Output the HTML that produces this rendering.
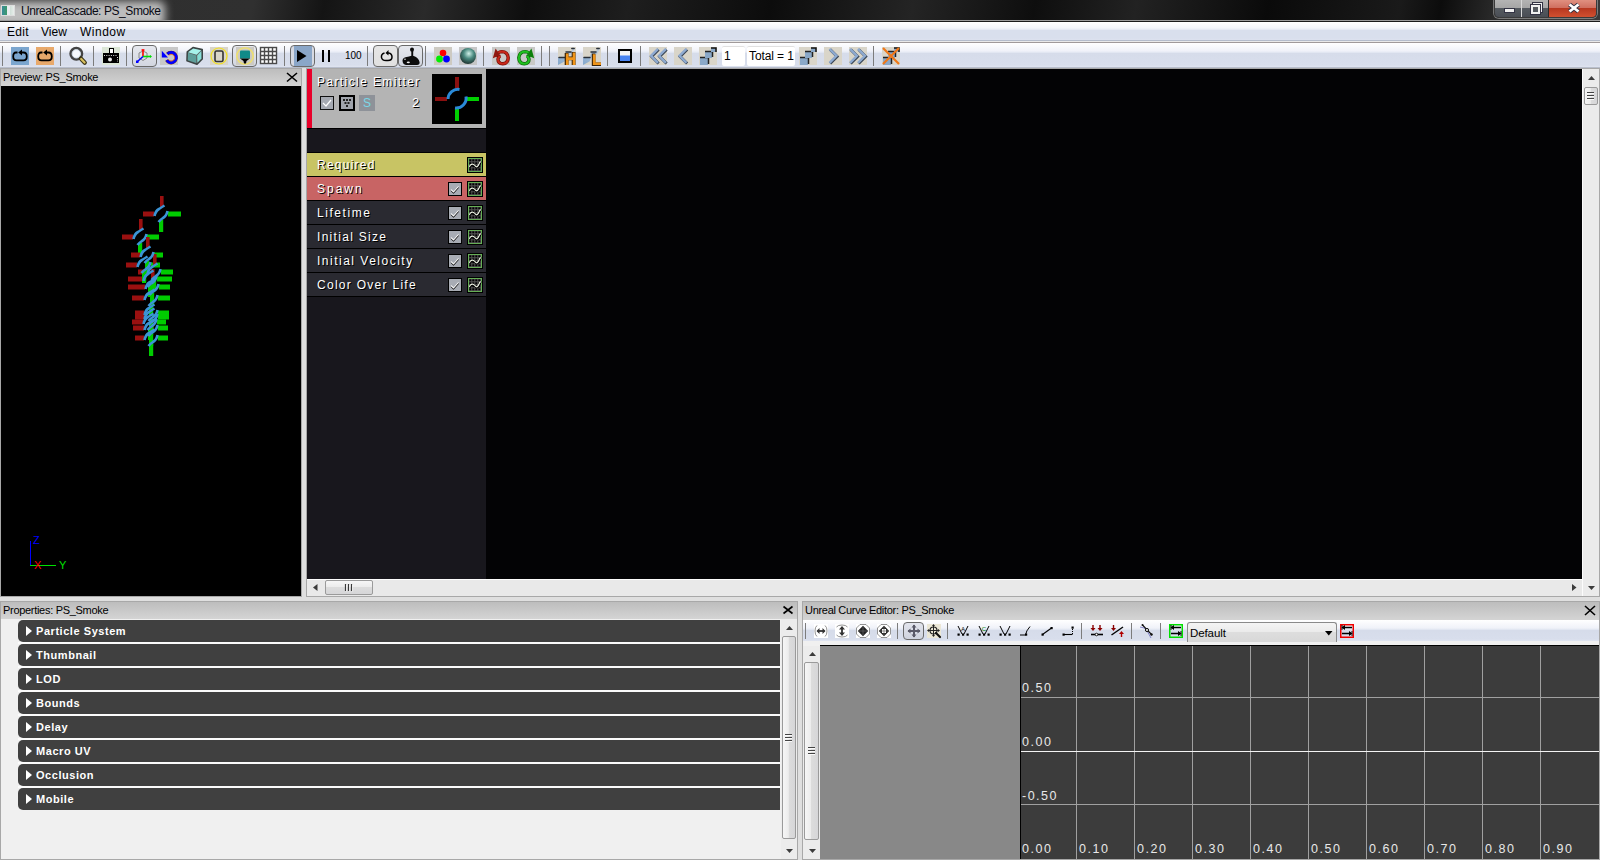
<!DOCTYPE html>
<html><head><meta charset="utf-8">
<style>
*{box-sizing:border-box;margin:0;padding:0}
html,body{width:1600px;height:860px;overflow:hidden;background:#dfdfdf;font-family:"Liberation Sans",sans-serif}
.a{position:absolute}
svg{position:absolute;overflow:visible}
#title{left:0;top:0;width:1600px;height:20px;overflow:hidden;background:linear-gradient(100deg,#2e2e2e 0px,#303030 250px,#141414 320px,#2a2a2a 420px,#0e0e0e 520px,#1e1e1e 620px,#0c0c0c 760px,#242424 900px,#0e0e0e 1020px,#222 1120px,#0a0a0a 1250px,#1a1a1a 1380px,#0c0c0c 1420px,#383838 1500px,#3a3a3a 1600px)}
#menu{left:0;top:22px;width:1600px;height:18px;background:linear-gradient(#ffffff 0px,#f3f5fa 6px,#e6eaf4 7.5px,#d9dfed 8.5px,#d9dfed 16px,#dde2ef 18px)}
#tool{left:0;top:43px;width:1600px;height:24px;background:linear-gradient(#ffffff 0px,#f0f2f9 8px,#e2e7f2 9.5px,#d6dcea 10.5px,#d8deec 22px,#dfe4f0 24px)}
.mi{position:absolute;top:25px;font-size:12px;color:#000}
.sep{position:absolute;width:1px;background:#7c7c7c;top:46px;height:20px}
.ic{position:absolute;top:47px;width:18px;height:18px}
.pb{position:absolute;top:45px;height:22px;border:1px solid #6a6a6a;border-radius:4px;background:linear-gradient(#e8eaf0,#d4d8e2)}
.hdr{position:absolute;height:18px;background:linear-gradient(#bdbdbd,#d4d4d4);font-size:11px;letter-spacing:-0.3px;color:#000;padding:2px 0 0 2px;border-top:1px solid #a8a8a8}
.xcl{position:absolute;width:10px;height:10px}
.mod{position:absolute;left:307px;width:179px;height:23px;color:#fff;font-size:12px;letter-spacing:1px;padding:5px 0 0 10px;text-shadow:1px 1px 0 #000}
.chk{position:absolute;left:448px;width:14px;height:14px;background:#a8acb4;border:1px solid #000}
.crv{position:absolute;left:467px;width:16px;height:16px;background:#111;border:1px solid #111}
.cat{position:absolute;left:18px;width:762px;height:22px;background:#404040;border-radius:5px 0 0 5px;color:#fff;font-weight:bold;font-size:11px;letter-spacing:0.55px;padding:5px 0 0 18px}
.cat:before{content:"";position:absolute;left:8px;top:6px;border-left:6.5px solid #fff;border-top:5.25px solid transparent;border-bottom:5.25px solid transparent}
.gl{position:absolute;font-family:"Liberation Sans",sans-serif;font-size:12.5px;color:#e8e8e8;letter-spacing:1.5px}
</style></head><body>

<!-- TITLE BAR -->
<div id="title" class="a"></div>
<div class="a" style="left:0;top:0;width:220px;height:20px;overflow:hidden"><div class="a" style="left:-20px;top:1px;width:185px;height:26px;background:#bdbdbd;filter:blur(4px);border-radius:6px"></div></div>
<div class="a" style="left:0;top:20px;width:1600px;height:1px;background:#9c9c9c"></div>
<div class="a" style="left:0;top:21px;width:1600px;height:1px;background:#1a1a1a"></div>
<div class="a" style="left:1px;top:5px;width:14px;height:11px;background:linear-gradient(90deg,#3a8a9a 0,#3c9a6a 5px,#e8ecef 5px,#e8ecef 8px,#d0e0d8 8px,#f4f4f4 14px);border:1px solid #ddd"></div>
<div class="a" style="left:21px;top:4px;font-size:12px;letter-spacing:-0.43px;color:#0a0a14">UnrealCascade: PS_Smoke</div>

<!-- window buttons -->
<div class="a" style="left:1494px;top:0;width:103px;height:18px;border:1px solid #3a3a3a;border-top:none;border-radius:0 0 5px 5px;overflow:hidden;box-shadow:0 0 0 1px rgba(255,255,255,.35)">
  <div class="a" style="left:0;top:0;width:27px;height:17px;background:linear-gradient(#b4b4b4 0%,#a6a6a6 45%,#555a60 50%,#4a4e55 100%);border-right:1px solid #d8d8d8"></div>
  <div class="a" style="left:27px;top:0;width:27px;height:17px;background:linear-gradient(#b4b4b4 0%,#a6a6a6 45%,#555a60 50%,#4a4e55 100%);border-right:1px solid #2a2a2a"></div>
  <div class="a" style="left:54px;top:0;width:49px;height:17px;background:linear-gradient(#e09080 0%,#d07060 45%,#b83820 50%,#d05030 100%)"></div>
  <div class="a" style="left:9px;top:8px;width:11px;height:5px;background:#f0f0f0;border:1px solid #334"></div>
  <div class="a" style="left:38px;top:3px;width:9px;height:9px;border:2px solid #f0f0f0;outline:1px solid #334"></div>
  <div class="a" style="left:36px;top:5px;width:9px;height:9px;border:2px solid #f0f0f0;outline:1px solid #334;background:#555a60"></div>
  <svg style="left:73px;top:3px" width="12" height="10"><path d="M1.5 1.5 L10.5 8.5 M10.5 1.5 L1.5 8.5" stroke="#334" stroke-width="4.6"/><path d="M1.5 1.5 L10.5 8.5 M10.5 1.5 L1.5 8.5" stroke="#fff" stroke-width="2.8"/></svg>
</div>

<!-- MENU -->
<div id="menu" class="a"></div>
<div class="a" style="left:0;top:40px;width:1600px;height:1px;background:#b4bccb"></div>
<div class="a" style="left:0;top:41px;width:1600px;height:1px;background:#e9e9e9"></div>
<div class="a" style="left:0;top:42px;width:1600px;height:1px;background:#a09a9a"></div>
<div class="mi" style="left:7px;letter-spacing:0.3px">Edit</div>
<div class="mi" style="left:41px">View</div>
<div class="mi" style="left:80px;letter-spacing:0.5px">Window</div>

<!-- TOOLBAR -->
<div id="tool" class="a"></div>
<div class="a" style="left:0;top:67px;width:1600px;height:1px;background:#b8becc"></div>
<div class="sep" style="left:2px;top:46px;height:20px"></div><div class="sep" style="left:60px;top:46px;height:20px"></div><div class="sep" style="left:93px;top:46px;height:20px"></div><div class="sep" style="left:126px;top:46px;height:20px"></div><div class="sep" style="left:284px;top:46px;height:20px"></div><div class="sep" style="left:367px;top:46px;height:20px"></div><div class="sep" style="left:425px;top:46px;height:20px"></div><div class="sep" style="left:483px;top:46px;height:20px"></div><div class="sep" style="left:541px;top:46px;height:20px"></div><div class="sep" style="left:549px;top:46px;height:20px"></div><div class="sep" style="left:607px;top:46px;height:20px"></div><div class="sep" style="left:640px;top:46px;height:20px"></div><div class="sep" style="left:873px;top:46px;height:20px"></div>
<svg style="left:11px;top:47px" width="18" height="18"><rect width="18" height="18" fill="#7ba6cf"/><path d="M6.5 5.5 H5 Q2.2 5.5 2.2 9.5 Q2.2 13.3 5.5 13.3 H12.5 Q15.8 13.3 15.8 9.5 Q15.8 5.5 12.5 5.5 H9.5" stroke="#000" stroke-width="1.8" fill="none"/><path d="M11 2.5 L7.2 5.5 L11 8.5Z" fill="#000"/></svg>
<svg style="left:36px;top:47px" width="18" height="18"><rect width="18" height="18" fill="#e8a96b"/><path d="M6.5 5.5 H5 Q2.2 5.5 2.2 9.5 Q2.2 13.3 5.5 13.3 H12.5 Q15.8 13.3 15.8 9.5 Q15.8 5.5 12.5 5.5 H9.5" stroke="#000" stroke-width="1.8" fill="none"/><path d="M11 2.5 L7.2 5.5 L11 8.5Z" fill="#000"/></svg>
<svg style="left:69px;top:47px" width="18" height="18"><circle cx="7.3" cy="6.8" r="5.6" fill="#f6f9fd" stroke="#444" stroke-width="2.8"/><circle cx="7.3" cy="6.8" r="4.2" fill="none" stroke="#d8e4f0" stroke-width="1"/><path d="M11.8 11.5 L15.8 15.8" stroke="#3a3418" stroke-width="4.2" stroke-linecap="round"/><path d="M12.2 12 L15.6 15.5" stroke="#d8c060" stroke-width="2.2" stroke-linecap="round"/></svg>
<svg style="left:102px;top:47px" width="18" height="18"><rect width="18" height="18" fill="#dbe6d6"/><rect x="1" y="6" width="16" height="10" fill="#000"/><rect x="7" y="1" width="5" height="6" fill="#000"/><rect x="8" y="2" width="3" height="4" fill="#fff"/><path d="M2 8.5 H15" stroke="#ddd" stroke-width="1" stroke-dasharray="1 1.3"/><circle cx="8" cy="12.5" r="2" fill="#eee"/><path d="M15.5 10V15" stroke="#ddd" stroke-dasharray="1 1.3"/></svg>
<div class="pb" style="left:132px;width:25px;background:linear-gradient(#e6e8ee,#d2d6e0)"></div>
<svg style="left:135px;top:47px" width="18" height="18"><path d="M8 4 L12 6 L12 11 L8 13.5 L4 11 L4 6Z" fill="none" stroke="#808080" stroke-width="0.9"/><path d="M8 9.5 V2.5" stroke="#f00" stroke-width="1.6"/><path d="M6.5 3 H9.5" stroke="#f00" stroke-width="1.4"/><path d="M8 9.5 H16" stroke="#0d0" stroke-width="1.6"/><path d="M15 8 L17 9.5 L15 11Z" fill="#0d0"/><path d="M8 9.5 L2.5 14.5" stroke="#00f" stroke-width="1.5"/><rect x="1" y="13.5" width="2.5" height="2.5" fill="#00f"/></svg>
<svg style="left:160px;top:47px" width="18" height="18"><rect width="18" height="18" fill="#c8c8c8"/><g style="filter:blur(0.2px)"><path d="M7.4 7 A5.1 5.1 0 1 1 6.7 13.1" stroke="#7a2a10" stroke-width="3.5" fill="none"/><path d="M7.4 7 A5.1 5.1 0 1 1 6.7 13.1" stroke="#0000ff" stroke-width="2.8" fill="none"/><path d="M8.8 8.6 A3.3 3.3 0 1 1 8.5 12.4" stroke="#f07030" stroke-width="0.8" fill="none"/><path d="M1.8 3.8 L1.8 10.6 L8 10.6Z" fill="#0000ff"/></g></svg>
<svg style="left:185px;top:47px" width="18" height="18"><g style="filter:blur(0.3px)"><path d="M2.3 5 L8 0.6 L17.2 2.6 L17.2 12 L12 17.2 L2 13.8Z" fill="#5a6262" stroke="#3c4444" stroke-width="1.6" stroke-linejoin="round"/><path d="M3 5.2 L8.2 1.5 L16.2 3.2 L11.6 7.8Z" fill="#a6f2ea"/><path d="M3 5.8 L11.2 8.6 L11.2 16 L2.8 13.2Z" fill="#5e9e9a"/><path d="M12.2 8.4 L16.4 4 L16.4 11.6 L12.4 15.8Z" fill="#86ded6"/></g></svg>
<svg style="left:210px;top:47px" width="18" height="18"><rect width="18" height="18" fill="#d9d5c9"/><circle cx="9" cy="9" r="8" fill="none" stroke="#f2e020" stroke-width="1.2"/><rect x="5" y="4" width="8" height="10.5" rx="1.5" fill="#d9d5c9" stroke="#333" stroke-width="1.6"/></svg>
<div class="pb" style="left:232px;width:25px;background:linear-gradient(#e6e8ee,#d2d6e0)"></div>
<svg style="left:236px;top:47px" width="18" height="18"><rect width="18" height="18" fill="#cdcac2"/><circle cx="9" cy="9" r="8.2" fill="none" stroke="#eee070" stroke-width="1.6"/><path d="M4 4.5 Q4 3.5 5 3.5 H13 Q14 3.5 14 4.5 V11.5 H4Z" fill="#108a88"/><path d="M4 11.5 H14 L10.5 14 L10 16.5 H8 L7.5 14Z" fill="#000"/></svg>
<svg style="left:260px;top:47px" width="17" height="17"><rect x="0.5" y="0.5" width="16" height="16" fill="#fff" stroke="#4a4a4a" stroke-width="1.4"/><path d="M4.5 0.5 V16.5 M0.5 4.5 H16.5" stroke="#4a4a4a" stroke-width="1.4"/><path d="M8.5 0.5 V16.5 M0.5 8.5 H16.5" stroke="#4a4a4a" stroke-width="1.4"/><path d="M12.5 0.5 V16.5 M0.5 12.5 H16.5" stroke="#4a4a4a" stroke-width="1.4"/></svg>
<div class="pb" style="left:290px;width:25px;background:linear-gradient(90deg,#d6d9e2 0,#d6d9e2 3px,#8aa6c8 3px,#8aa6c8 21px,#d6d9e2 21px)"></div>
<svg style="left:297px;top:50px" width="10" height="12"><path d="M0 0 L9.5 6 L0 12Z" fill="#000"/></svg>
<div class="a" style="left:322px;top:50px;width:2px;height:12px;background:#000"></div><div class="a" style="left:328px;top:50px;width:2px;height:12px;background:#000"></div>
<div class="a" style="left:345px;top:50px;font-size:10px;color:#000">100</div>
<div class="pb" style="left:373px;width:25px;background:linear-gradient(#e6e6e6,#e0e0e0)"></div>
<svg style="left:380px;top:50px" width="14" height="12"><path d="M4.5 3 Q1 4 1.5 7.5 Q2 10.5 6 10.5 H8 Q12 10.5 12 7 Q12 3.5 8.5 3 H7" stroke="#000" stroke-width="1.5" fill="none"/><path d="M8.5 0 L5.5 3 L8.5 5.5Z" fill="#000"/></svg>
<div class="pb" style="left:398px;width:25px;background:linear-gradient(#e6e8ee,#d2d6e0)"></div>
<svg style="left:402px;top:47px" width="18" height="18"><g style="filter:blur(0.25px)"><path d="M0.5 13.8 Q0.6 10.8 3.5 10.2 L7 9.6 Q10 8.2 13 9.4 Q16.6 10.8 17.6 15.2 Q17.8 17.8 15 17.9 L4 17.9 Q0.8 17.6 0.5 13.8Z" fill="#0c0c0c"/><rect x="9.3" y="4" width="1.9" height="6" fill="#0c0c0c"/><ellipse cx="10" cy="2.6" rx="2" ry="2.2" fill="#0c0c0c"/><ellipse cx="6.3" cy="15.4" rx="1.6" ry=".8" fill="#eee"/><circle cx="3" cy="12.2" r=".8" fill="#ddd"/></g></svg>
<svg style="left:434px;top:47px" width="18" height="18"><rect width="18" height="18" fill="#cdcac2"/><circle cx="9" cy="6" r="3.3" fill="#f00"/><circle cx="5.5" cy="12" r="3.4" fill="#0e0"/><circle cx="12.5" cy="12" r="3.4" fill="#00f"/></svg>
<svg style="left:459px;top:47px" width="18" height="18"><rect width="18" height="18" fill="#c6c6c6"/><defs><radialGradient id="sp" cx="0.55" cy="0.35" r="0.7"><stop offset="0" stop-color="#d0f0e8"/><stop offset=".45" stop-color="#4a8a80"/><stop offset="1" stop-color="#1a2a28"/></radialGradient></defs><circle cx="9" cy="9" r="8" fill="url(#sp)"/></svg>
<svg style="left:492px;top:47px" width="18" height="18"><rect width="18" height="18" fill="#c9c9c7"/><g style="filter:blur(0.3px)"><path d="M3.5 9.2 Q5.5 5 9.8 4.6 Q15.6 4.8 16.2 10.6 Q16 16.6 10.8 16.8 Q6 16.6 6 12.2 Q6.3 9.6 8.6 9.4" stroke="#701008" stroke-width="3.4" fill="none"/><path d="M3.5 9.2 Q5.5 5 9.8 4.6 Q15.6 4.8 16.2 10.6 Q16 16.6 10.8 16.8 Q6 16.6 6 12.2 Q6.3 9.6 8.6 9.4" stroke="#c8281a" stroke-width="2" fill="none"/><path d="M3.6 1.4 L0.8 11.2 L8.2 8.2Z" fill="#901810"/></g></svg>
<svg style="left:517px;top:47px" width="18" height="18"><rect width="18" height="18" fill="#c9c9c7"/><g transform="translate(18,0) scale(-1,1)" style="filter:blur(0.3px)"><path d="M3.5 9.2 Q5.5 5 9.8 4.6 Q15.6 4.8 16.2 10.6 Q16 16.6 10.8 16.8 Q6 16.6 6 12.2 Q6.3 9.6 8.6 9.4" stroke="#0a600a" stroke-width="3.4" fill="none"/><path d="M3.5 9.2 Q5.5 5 9.8 4.6 Q15.6 4.8 16.2 10.6 Q16 16.6 10.8 16.8 Q6 16.6 6 12.2 Q6.3 9.6 8.6 9.4" stroke="#20c020" stroke-width="2" fill="none"/><path d="M3.6 1.4 L0.8 11.2 L8.2 8.2Z" fill="#0c800c"/></g></svg>
<svg style="left:558px;top:47px" width="18" height="18"><rect width="18" height="18" fill="#d9d5c9"/><defs><linearGradient id="stg" x1="0" y1="1" x2="1" y2="0"><stop offset="0" stop-color="#7ea4cc"/><stop offset="1" stop-color="#c0d0e0"/></linearGradient></defs><path d="M0 10.8 L6.5 10.5 L8.5 5 L13 4.6 L15 1.4 L17 1.4 L14 7.2 L9.5 8.6 L6.5 14.5 L0 18Z" fill="url(#stg)" opacity=".95"/><path d="M1 10.6 H7 M8 5 H13 M13.8 1.6 H16.2" stroke="#2a3038" stroke-width="1.5" stroke-linecap="round"/><path d="M8.6 6 V18 M15.6 5 V18 M8.6 11.3 H15.6" stroke="#3a2408" stroke-width="3.8"/><path d="M9.2 6.6 V18 M16 5.6 V18 M9 11.6 H15.6" stroke="#f09418" stroke-width="2.6"/></svg>
<svg style="left:583px;top:47px" width="18" height="18"><rect width="18" height="18" fill="#d9d5c9"/><defs><linearGradient id="stg" x1="0" y1="1" x2="1" y2="0"><stop offset="0" stop-color="#7ea4cc"/><stop offset="1" stop-color="#c0d0e0"/></linearGradient></defs><path d="M0 10.8 L6.5 10.5 L8.5 5 L13 4.6 L15 1.4 L17 1.4 L14 7.2 L9.5 8.6 L6.5 14.5 L0 18Z" fill="url(#stg)" opacity=".95"/><path d="M1 10.6 H7 M8 5 H13 M13.8 1.6 H16.2" stroke="#2a3038" stroke-width="1.5" stroke-linecap="round"/><path d="M10.6 6.6 V17.2 H18" stroke="#3a2408" stroke-width="3.6" fill="none"/><path d="M11.2 7.2 V16.8 H18" stroke="#f09418" stroke-width="2.6" fill="none"/></svg>
<svg style="left:618px;top:49px" width="14" height="14"><rect x="1" y="1" width="12" height="12" fill="#4a84f0" stroke="#000" stroke-width="2"/><rect x="2" y="2" width="10" height="4.5" fill="#f4f4f4"/></svg>
<svg style="left:649px;top:47px" width="18" height="18"><rect width="18" height="18" fill="#d9d5c9"/><path d="M9 1.8 L2 8.8 L9 15.8" stroke="#3a4656" stroke-width="3" fill="none" transform="translate(0.6,0.7)"/><path d="M9 1.8 L2 8.8 L9 15.8" stroke="#8eaad0" stroke-width="2.4" fill="none"/><path d="M17 1.8 L10 8.8 L17 15.8" stroke="#3a4656" stroke-width="3" fill="none" transform="translate(0.6,0.7)"/><path d="M17 1.8 L10 8.8 L17 15.8" stroke="#8eaad0" stroke-width="2.4" fill="none"/></svg>
<svg style="left:674px;top:47px" width="18" height="18"><rect width="18" height="18" fill="#d9d5c9"/><path d="M12.5 1.8 L5.5 8.8 L12.5 15.8" stroke="#3a4656" stroke-width="3" fill="none" transform="translate(0.6,0.7)"/><path d="M12.5 1.8 L5.5 8.8 L12.5 15.8" stroke="#8eaad0" stroke-width="2.4" fill="none"/></svg>
<svg style="left:699px;top:47px" width="18" height="18"><rect width="18" height="18" fill="#d9d5c9"/><rect x="1" y="10" width="8" height="8" fill="#8aa8c8"/><path d="M1 10.5 H9.5 V17" stroke="#222" stroke-width="1.5" fill="none"/><rect x="6" y="4" width="7" height="7" fill="#8aa8c8"/><path d="M6 4.5 H13.5 V10" stroke="#222" stroke-width="1.5" fill="none"/><rect x="12" y="1" width="5" height="4" fill="#8aa8c8"/><path d="M12 1 H17 V5" stroke="#111" stroke-width="1.5" fill="none"/></svg>
<div class="a" style="left:722px;top:46px;width:23px;height:20px;background:#fff;border-top:1px solid #e0e0e0;border-radius:2px"></div><div class="a" style="left:724px;top:49px;font-size:12px;color:#000">1</div>
<div class="a" style="left:747px;top:46px;width:48px;height:20px;background:#fff;border-top:1px solid #e0e0e0;border-radius:2px"></div><div class="a" style="left:749px;top:49px;font-size:12px;letter-spacing:-0.1px;color:#000">Total = 1</div>
<svg style="left:799px;top:47px" width="18" height="18"><rect width="18" height="18" fill="#d9d5c9"/><rect x="1" y="10" width="8" height="8" fill="#8aa8c8"/><path d="M1 10.5 H9.5 V17" stroke="#222" stroke-width="1.5" fill="none"/><rect x="6" y="4" width="7" height="7" fill="#8aa8c8"/><path d="M6 4.5 H13.5 V10" stroke="#222" stroke-width="1.5" fill="none"/><rect x="12" y="1" width="5" height="4" fill="#8aa8c8"/><path d="M12 1 H17 V5" stroke="#111" stroke-width="1.5" fill="none"/></svg>
<svg style="left:824px;top:47px" width="18" height="18"><rect width="18" height="18" fill="#d9d5c9"/><path d="M5.5 1.8 L12.5 8.8 L5.5 15.8" stroke="#3a4656" stroke-width="3" fill="none" transform="translate(0.6,0.7)"/><path d="M5.5 1.8 L12.5 8.8 L5.5 15.8" stroke="#8eaad0" stroke-width="2.4" fill="none"/></svg>
<svg style="left:849px;top:47px" width="18" height="18"><rect width="18" height="18" fill="#d9d5c9"/><path d="M1 1.8 L8 8.8 L1 15.8" stroke="#3a4656" stroke-width="3" fill="none" transform="translate(0.6,0.7)"/><path d="M1 1.8 L8 8.8 L1 15.8" stroke="#8eaad0" stroke-width="2.4" fill="none"/><path d="M9 1.8 L16 8.8 L9 15.8" stroke="#3a4656" stroke-width="3" fill="none" transform="translate(0.6,0.7)"/><path d="M9 1.8 L16 8.8 L9 15.8" stroke="#8eaad0" stroke-width="2.4" fill="none"/></svg>
<svg style="left:882px;top:47px" width="18" height="18"><rect width="18" height="18" fill="#d9d5c9"/><rect x="1" y="10" width="8" height="8" fill="#8aa8c8"/><path d="M1 10.5 H9.5 V17" stroke="#222" stroke-width="1.5" fill="none"/><rect x="6" y="4" width="7" height="7" fill="#8aa8c8"/><path d="M6 4.5 H13.5 V10" stroke="#222" stroke-width="1.5" fill="none"/><rect x="12" y="1" width="5" height="4" fill="#8aa8c8"/><path d="M12 1 H17 V5" stroke="#111" stroke-width="1.5" fill="none"/><path d="M1 1 L17 17 M17 1 L1 17" stroke="#f07818" stroke-width="2.2"/></svg>

<!-- PREVIEW PANEL -->
<div class="a" style="left:0;top:68px;width:302px;height:529px;background:#a8a8a8"></div>
<div class="hdr" style="left:1px;top:68px;width:300px">Preview: PS_Smoke</div>
<svg style="left:287px;top:73px" width="10" height="9"><path d="M0 0 L10 8.5 M10 0 L0 8.5" stroke="#000" stroke-width="1.6"/></svg>
<div class="a" style="left:1px;top:86px;width:300px;height:510px;background:#000"></div>
<svg style="left:0;top:0" width="302" height="600"><g style="filter:blur(0.55px)"><rect x="143" y="211.5" width="11" height="5" fill="#9a1010"/><rect x="168" y="211.5" width="13" height="5" fill="#00cc00"/><rect x="160" y="196" width="3.6" height="11" fill="#9a1010"/><rect x="159" y="220" width="4.2" height="12" fill="#00cc00"/><path d="M154.5 216 Q155.5 211 159 209 Q162 207 164.5 205.5" stroke="#3b94d6" stroke-width="2.6" fill="none"/><path d="M167.5 211 Q166.5 216 163 218 Q160 220 158.5 222" stroke="#3b94d6" stroke-width="2.6" fill="none"/><rect x="122" y="234.5" width="11" height="5" fill="#9a1010"/><rect x="147" y="234.5" width="12" height="5" fill="#00cc00"/><rect x="139" y="219" width="3.6" height="11" fill="#9a1010"/><rect x="138" y="243" width="4.2" height="12" fill="#00cc00"/><path d="M133.5 239 Q134.5 234 138 232 Q141 230 143.5 228.5" stroke="#3b94d6" stroke-width="2.6" fill="none"/><path d="M146.5 234 Q145.5 239 142 241 Q139 243 137.5 245" stroke="#3b94d6" stroke-width="2.6" fill="none"/><rect x="131" y="252.5" width="9" height="5" fill="#9a1010"/><rect x="154" y="252.5" width="9" height="5" fill="#00cc00"/><rect x="146" y="237" width="3.6" height="11" fill="#9a1010"/><rect x="126" y="262.5" width="11" height="5" fill="#9a1010"/><rect x="151" y="262.5" width="9" height="5" fill="#00cc00"/><rect x="138" y="269.5" width="9" height="5" fill="#9a1010"/><rect x="161" y="269.5" width="12" height="5" fill="#00cc00"/><rect x="153" y="254" width="3.6" height="11" fill="#9a1010"/><rect x="128" y="276.5" width="15" height="5" fill="#9a1010"/><rect x="157" y="276.5" width="15" height="5" fill="#00cc00"/><rect x="128" y="284.5" width="17" height="5" fill="#9a1010"/><rect x="159" y="284.5" width="11" height="5" fill="#00cc00"/><rect x="151" y="269" width="3.6" height="11" fill="#9a1010"/><rect x="132" y="295.5" width="12" height="5" fill="#9a1010"/><rect x="158" y="295.5" width="12" height="5" fill="#00cc00"/><rect x="135" y="310.5" width="9" height="5" fill="#9a1010"/><rect x="158" y="310.5" width="11" height="5" fill="#00cc00"/><rect x="150" y="295" width="3.6" height="11" fill="#9a1010"/><rect x="135" y="314.5" width="9" height="5" fill="#9a1010"/><rect x="158" y="314.5" width="11" height="5" fill="#00cc00"/><rect x="132" y="319.5" width="11" height="5" fill="#9a1010"/><rect x="157" y="319.5" width="9" height="5" fill="#00cc00"/><rect x="149" y="304" width="3.6" height="11" fill="#9a1010"/><rect x="133" y="325.5" width="11" height="5" fill="#9a1010"/><rect x="158" y="325.5" width="10" height="5" fill="#00cc00"/><rect x="135" y="335.5" width="9" height="5" fill="#9a1010"/><rect x="158" y="335.5" width="10" height="5" fill="#00cc00"/><rect x="150" y="320" width="3.6" height="11" fill="#9a1010"/><rect x="145" y="261" width="4.2" height="12" fill="#00cc00"/><rect x="142" y="271" width="4.2" height="12" fill="#00cc00"/><rect x="152" y="278" width="4.2" height="12" fill="#00cc00"/><rect x="148" y="285" width="4.2" height="12" fill="#00cc00"/><rect x="150" y="293" width="4.2" height="12" fill="#00cc00"/><rect x="149" y="304" width="4.2" height="12" fill="#00cc00"/><rect x="149" y="319" width="4.2" height="12" fill="#00cc00"/><rect x="149" y="323" width="4.2" height="12" fill="#00cc00"/><rect x="148" y="328" width="4.2" height="12" fill="#00cc00"/><rect x="149" y="334" width="4.2" height="12" fill="#00cc00"/><rect x="149" y="344" width="4.2" height="12" fill="#00cc00"/><path d="M140.5 257 Q141.5 252 145 250 Q148 248 150.5 246.5" stroke="#3b94d6" stroke-width="2.6" fill="none"/><path d="M153.5 252 Q152.5 257 149 259 Q146 261 144.5 263" stroke="#3b94d6" stroke-width="2.6" fill="none"/><path d="M137.5 267 Q138.5 262 142 260 Q145 258 147.5 256.5" stroke="#3b94d6" stroke-width="2.6" fill="none"/><path d="M150.5 262 Q149.5 267 146 269 Q143 271 141.5 273" stroke="#3b94d6" stroke-width="2.6" fill="none"/><path d="M147.5 274 Q148.5 269 152 267 Q155 265 157.5 263.5" stroke="#3b94d6" stroke-width="2.6" fill="none"/><path d="M160.5 269 Q159.5 274 156 276 Q153 278 151.5 280" stroke="#3b94d6" stroke-width="2.6" fill="none"/><path d="M143.5 281 Q144.5 276 148 274 Q151 272 153.5 270.5" stroke="#3b94d6" stroke-width="2.6" fill="none"/><path d="M156.5 276 Q155.5 281 152 283 Q149 285 147.5 287" stroke="#3b94d6" stroke-width="2.6" fill="none"/><path d="M145.5 289 Q146.5 284 150 282 Q153 280 155.5 278.5" stroke="#3b94d6" stroke-width="2.6" fill="none"/><path d="M158.5 284 Q157.5 289 154 291 Q151 293 149.5 295" stroke="#3b94d6" stroke-width="2.6" fill="none"/><path d="M144.5 300 Q145.5 295 149 293 Q152 291 154.5 289.5" stroke="#3b94d6" stroke-width="2.6" fill="none"/><path d="M157.5 295 Q156.5 300 153 302 Q150 304 148.5 306" stroke="#3b94d6" stroke-width="2.6" fill="none"/><path d="M144.5 315 Q145.5 310 149 308 Q152 306 154.5 304.5" stroke="#3b94d6" stroke-width="2.6" fill="none"/><path d="M157.5 310 Q156.5 315 153 317 Q150 319 148.5 321" stroke="#3b94d6" stroke-width="2.6" fill="none"/><path d="M144.5 319 Q145.5 314 149 312 Q152 310 154.5 308.5" stroke="#3b94d6" stroke-width="2.6" fill="none"/><path d="M157.5 314 Q156.5 319 153 321 Q150 323 148.5 325" stroke="#3b94d6" stroke-width="2.6" fill="none"/><path d="M143.5 324 Q144.5 319 148 317 Q151 315 153.5 313.5" stroke="#3b94d6" stroke-width="2.6" fill="none"/><path d="M156.5 319 Q155.5 324 152 326 Q149 328 147.5 330" stroke="#3b94d6" stroke-width="2.6" fill="none"/><path d="M144.5 330 Q145.5 325 149 323 Q152 321 154.5 319.5" stroke="#3b94d6" stroke-width="2.6" fill="none"/><path d="M157.5 325 Q156.5 330 153 332 Q150 334 148.5 336" stroke="#3b94d6" stroke-width="2.6" fill="none"/><path d="M144.5 340 Q145.5 335 149 333 Q152 331 154.5 329.5" stroke="#3b94d6" stroke-width="2.6" fill="none"/><path d="M157.5 335 Q156.5 340 153 342 Q150 344 148.5 346" stroke="#3b94d6" stroke-width="2.6" fill="none"/></g></svg>
<!-- axis -->
<div class="a" style="left:30px;top:541px;width:1px;height:25px;background:#0000ff"></div>
<div class="a" style="left:30px;top:565px;width:26px;height:1px;background:#00e000"></div>
<div class="a" style="left:33px;top:534px;font-size:11px;color:#0000ff">Z</div>
<div class="a" style="left:34px;top:559px;font-size:11px;color:#ff0000">X</div>
<div class="a" style="left:59px;top:559px;font-size:11px;color:#00e000">Y</div>

<!-- EMITTER PANEL -->
<div class="a" style="left:306px;top:68px;width:1294px;height:529px;background:#a8a8a8"></div>
<div class="a" style="left:307px;top:69px;width:1275px;height:510px;background:#030305"></div>
<div class="a" style="left:307px;top:69px;width:179px;height:510px;background:#18171d"></div>
<div class="a" style="left:307px;top:69px;width:179px;height:59px;background:#b4b4b4"></div>
<div class="a" style="left:307px;top:69px;width:5px;height:59px;background:#e8002a"></div>
<div class="a" style="left:307px;top:128px;width:179px;height:1px;background:#000"></div>
<div class="a" style="left:317px;top:75px;color:#fff;font-size:12px;letter-spacing:1.4px;text-shadow:1px 1px 0 #000">Particle Emitter</div>
<div class="a" style="left:412px;top:95px;color:#fff;font-size:13px;text-shadow:1px 1px 0 #000">2</div>
<div class="a" style="left:320px;top:96px;width:14px;height:14px;background:#a6aab2;border:1px solid #111"></div>
<svg style="left:320px;top:96px" width="14" height="14"><path d="M3 7 L6 10 L11 4" stroke="#fff" stroke-width="1.2" fill="none"/></svg>
<div class="a" style="left:339px;top:95px;width:16px;height:16px;background:#a0a4ac;border:2px solid #000"></div>
<svg style="left:339px;top:95px" width="16" height="16"><g fill="#222"><rect x="4" y="4" width="2" height="2"/><rect x="7" y="4" width="2" height="2"/><rect x="10" y="4" width="2" height="2"/><rect x="5.5" y="7" width="2" height="2"/><rect x="8.5" y="7" width="2" height="2"/><rect x="7" y="10" width="2" height="2"/></g></svg>
<div class="a" style="left:359px;top:95px;width:16px;height:16px;background:#8e9299"></div>
<div class="a" style="left:363px;top:96px;color:#7ad8e8;font-size:12px">S</div>
<div class="a" style="left:432px;top:74px;width:50px;height:50px;background:#000"></div>
<svg style="left:432px;top:74px" width="50" height="50">
 <rect x="23" y="3" width="4" height="12" fill="#8a1010"/>
 <rect x="3" y="23" width="12" height="4" fill="#8a1010"/>
 <rect x="34" y="23" width="13" height="4" fill="#00d000"/>
 <rect x="23" y="34" width="4" height="13" fill="#00d000"/>
 <path d="M16 25 A10 10 0 0 1 27.5 15.5" stroke="#2a8ad8" stroke-width="3" fill="none"/>
 <path d="M34 22.5 A10 10 0 0 1 23 34" stroke="#2a8ad8" stroke-width="3" fill="none"/>
</svg>
<div class="a" style="left:307px;top:152px;width:179px;height:1px;background:#000"></div>
<div class="mod" style="top:153px;background:#c8c464;letter-spacing:1.25px">Required</div>
<div class="a" style="left:307px;top:176px;width:179px;height:1px;background:#000"></div>
<svg style="left:467px;top:157px" width="16" height="16"><rect x="0" y="0" width="16" height="16" fill="#000"/><rect x="1" y="1" width="14" height="14" fill="#66ae56"/><rect x="2" y="2" width="12" height="12" fill="#555"/><rect x="2.3" y="2.3" width="2" height="2" fill="#000"/><rect x="2.3" y="5.3" width="2" height="2" fill="#000"/><rect x="2.3" y="8.3" width="2" height="2" fill="#000"/><rect x="2.3" y="11.3" width="2" height="2" fill="#000"/><rect x="5.3" y="2.3" width="2" height="2" fill="#000"/><rect x="5.3" y="5.3" width="2" height="2" fill="#000"/><rect x="5.3" y="8.3" width="2" height="2" fill="#000"/><rect x="5.3" y="11.3" width="2" height="2" fill="#000"/><rect x="8.3" y="2.3" width="2" height="2" fill="#000"/><rect x="8.3" y="5.3" width="2" height="2" fill="#000"/><rect x="8.3" y="8.3" width="2" height="2" fill="#000"/><rect x="8.3" y="11.3" width="2" height="2" fill="#000"/><rect x="11.3" y="2.3" width="2" height="2" fill="#000"/><rect x="11.3" y="5.3" width="2" height="2" fill="#000"/><rect x="11.3" y="8.3" width="2" height="2" fill="#000"/><rect x="11.3" y="11.3" width="2" height="2" fill="#000"/><path d="M2.2 9.8 Q4 6.5 6 7.3 Q7.5 8 9 9.6 Q10.5 10.5 12 7 Q13 4.5 14 5" stroke="#000" stroke-width="2.2" fill="none" transform="translate(0.4,0.6)"/><path d="M2.2 9.8 Q4 6.5 6 7.3 Q7.5 8 9 9.6 Q10.5 10.5 12 7 Q13 4.5 14 5" stroke="#f2f8e8" stroke-width="1.2" fill="none"/></svg>
<div class="mod" style="top:177px;background:#c86464;letter-spacing:2.0px">Spawn</div>
<div class="a" style="left:307px;top:200px;width:179px;height:1px;background:#000"></div>
<div class="chk" style="top:182px"></div><svg style="left:448px;top:182px" width="14" height="14"><path d="M3 8.3 L5.5 10.8 L10.5 5.3" stroke="#000" stroke-width="1.2" fill="none"/><path d="M3 7.6 L5.5 10 L10.5 4.5" stroke="#fff" stroke-width="1.1" fill="none"/></svg>
<svg style="left:467px;top:181px" width="16" height="16"><rect x="0" y="0" width="16" height="16" fill="#000"/><rect x="1" y="1" width="14" height="14" fill="#66ae56"/><rect x="2" y="2" width="12" height="12" fill="#555"/><rect x="2.3" y="2.3" width="2" height="2" fill="#000"/><rect x="2.3" y="5.3" width="2" height="2" fill="#000"/><rect x="2.3" y="8.3" width="2" height="2" fill="#000"/><rect x="2.3" y="11.3" width="2" height="2" fill="#000"/><rect x="5.3" y="2.3" width="2" height="2" fill="#000"/><rect x="5.3" y="5.3" width="2" height="2" fill="#000"/><rect x="5.3" y="8.3" width="2" height="2" fill="#000"/><rect x="5.3" y="11.3" width="2" height="2" fill="#000"/><rect x="8.3" y="2.3" width="2" height="2" fill="#000"/><rect x="8.3" y="5.3" width="2" height="2" fill="#000"/><rect x="8.3" y="8.3" width="2" height="2" fill="#000"/><rect x="8.3" y="11.3" width="2" height="2" fill="#000"/><rect x="11.3" y="2.3" width="2" height="2" fill="#000"/><rect x="11.3" y="5.3" width="2" height="2" fill="#000"/><rect x="11.3" y="8.3" width="2" height="2" fill="#000"/><rect x="11.3" y="11.3" width="2" height="2" fill="#000"/><path d="M2.2 9.8 Q4 6.5 6 7.3 Q7.5 8 9 9.6 Q10.5 10.5 12 7 Q13 4.5 14 5" stroke="#000" stroke-width="2.2" fill="none" transform="translate(0.4,0.6)"/><path d="M2.2 9.8 Q4 6.5 6 7.3 Q7.5 8 9 9.6 Q10.5 10.5 12 7 Q13 4.5 14 5" stroke="#f2f8e8" stroke-width="1.2" fill="none"/></svg>
<div class="mod" style="top:201px;background:#2a2a31;letter-spacing:1.55px">Lifetime</div>
<div class="a" style="left:307px;top:224px;width:179px;height:1px;background:#000"></div>
<div class="chk" style="top:206px"></div><svg style="left:448px;top:206px" width="14" height="14"><path d="M3 8.3 L5.5 10.8 L10.5 5.3" stroke="#000" stroke-width="1.2" fill="none"/><path d="M3 7.6 L5.5 10 L10.5 4.5" stroke="#fff" stroke-width="1.1" fill="none"/></svg>
<svg style="left:467px;top:205px" width="16" height="16"><rect x="0" y="0" width="16" height="16" fill="#000"/><rect x="1" y="1" width="14" height="14" fill="#66ae56"/><rect x="2" y="2" width="12" height="12" fill="#555"/><rect x="2.3" y="2.3" width="2" height="2" fill="#000"/><rect x="2.3" y="5.3" width="2" height="2" fill="#000"/><rect x="2.3" y="8.3" width="2" height="2" fill="#000"/><rect x="2.3" y="11.3" width="2" height="2" fill="#000"/><rect x="5.3" y="2.3" width="2" height="2" fill="#000"/><rect x="5.3" y="5.3" width="2" height="2" fill="#000"/><rect x="5.3" y="8.3" width="2" height="2" fill="#000"/><rect x="5.3" y="11.3" width="2" height="2" fill="#000"/><rect x="8.3" y="2.3" width="2" height="2" fill="#000"/><rect x="8.3" y="5.3" width="2" height="2" fill="#000"/><rect x="8.3" y="8.3" width="2" height="2" fill="#000"/><rect x="8.3" y="11.3" width="2" height="2" fill="#000"/><rect x="11.3" y="2.3" width="2" height="2" fill="#000"/><rect x="11.3" y="5.3" width="2" height="2" fill="#000"/><rect x="11.3" y="8.3" width="2" height="2" fill="#000"/><rect x="11.3" y="11.3" width="2" height="2" fill="#000"/><path d="M2.2 9.8 Q4 6.5 6 7.3 Q7.5 8 9 9.6 Q10.5 10.5 12 7 Q13 4.5 14 5" stroke="#000" stroke-width="2.2" fill="none" transform="translate(0.4,0.6)"/><path d="M2.2 9.8 Q4 6.5 6 7.3 Q7.5 8 9 9.6 Q10.5 10.5 12 7 Q13 4.5 14 5" stroke="#f2f8e8" stroke-width="1.2" fill="none"/></svg>
<div class="mod" style="top:225px;background:#2a2a31;letter-spacing:1.3px">Initial Size</div>
<div class="a" style="left:307px;top:248px;width:179px;height:1px;background:#000"></div>
<div class="chk" style="top:230px"></div><svg style="left:448px;top:230px" width="14" height="14"><path d="M3 8.3 L5.5 10.8 L10.5 5.3" stroke="#000" stroke-width="1.2" fill="none"/><path d="M3 7.6 L5.5 10 L10.5 4.5" stroke="#fff" stroke-width="1.1" fill="none"/></svg>
<svg style="left:467px;top:229px" width="16" height="16"><rect x="0" y="0" width="16" height="16" fill="#000"/><rect x="1" y="1" width="14" height="14" fill="#66ae56"/><rect x="2" y="2" width="12" height="12" fill="#555"/><rect x="2.3" y="2.3" width="2" height="2" fill="#000"/><rect x="2.3" y="5.3" width="2" height="2" fill="#000"/><rect x="2.3" y="8.3" width="2" height="2" fill="#000"/><rect x="2.3" y="11.3" width="2" height="2" fill="#000"/><rect x="5.3" y="2.3" width="2" height="2" fill="#000"/><rect x="5.3" y="5.3" width="2" height="2" fill="#000"/><rect x="5.3" y="8.3" width="2" height="2" fill="#000"/><rect x="5.3" y="11.3" width="2" height="2" fill="#000"/><rect x="8.3" y="2.3" width="2" height="2" fill="#000"/><rect x="8.3" y="5.3" width="2" height="2" fill="#000"/><rect x="8.3" y="8.3" width="2" height="2" fill="#000"/><rect x="8.3" y="11.3" width="2" height="2" fill="#000"/><rect x="11.3" y="2.3" width="2" height="2" fill="#000"/><rect x="11.3" y="5.3" width="2" height="2" fill="#000"/><rect x="11.3" y="8.3" width="2" height="2" fill="#000"/><rect x="11.3" y="11.3" width="2" height="2" fill="#000"/><path d="M2.2 9.8 Q4 6.5 6 7.3 Q7.5 8 9 9.6 Q10.5 10.5 12 7 Q13 4.5 14 5" stroke="#000" stroke-width="2.2" fill="none" transform="translate(0.4,0.6)"/><path d="M2.2 9.8 Q4 6.5 6 7.3 Q7.5 8 9 9.6 Q10.5 10.5 12 7 Q13 4.5 14 5" stroke="#f2f8e8" stroke-width="1.2" fill="none"/></svg>
<div class="mod" style="top:249px;background:#2a2a31;letter-spacing:1.5px">Initial Velocity</div>
<div class="a" style="left:307px;top:272px;width:179px;height:1px;background:#000"></div>
<div class="chk" style="top:254px"></div><svg style="left:448px;top:254px" width="14" height="14"><path d="M3 8.3 L5.5 10.8 L10.5 5.3" stroke="#000" stroke-width="1.2" fill="none"/><path d="M3 7.6 L5.5 10 L10.5 4.5" stroke="#fff" stroke-width="1.1" fill="none"/></svg>
<svg style="left:467px;top:253px" width="16" height="16"><rect x="0" y="0" width="16" height="16" fill="#000"/><rect x="1" y="1" width="14" height="14" fill="#66ae56"/><rect x="2" y="2" width="12" height="12" fill="#555"/><rect x="2.3" y="2.3" width="2" height="2" fill="#000"/><rect x="2.3" y="5.3" width="2" height="2" fill="#000"/><rect x="2.3" y="8.3" width="2" height="2" fill="#000"/><rect x="2.3" y="11.3" width="2" height="2" fill="#000"/><rect x="5.3" y="2.3" width="2" height="2" fill="#000"/><rect x="5.3" y="5.3" width="2" height="2" fill="#000"/><rect x="5.3" y="8.3" width="2" height="2" fill="#000"/><rect x="5.3" y="11.3" width="2" height="2" fill="#000"/><rect x="8.3" y="2.3" width="2" height="2" fill="#000"/><rect x="8.3" y="5.3" width="2" height="2" fill="#000"/><rect x="8.3" y="8.3" width="2" height="2" fill="#000"/><rect x="8.3" y="11.3" width="2" height="2" fill="#000"/><rect x="11.3" y="2.3" width="2" height="2" fill="#000"/><rect x="11.3" y="5.3" width="2" height="2" fill="#000"/><rect x="11.3" y="8.3" width="2" height="2" fill="#000"/><rect x="11.3" y="11.3" width="2" height="2" fill="#000"/><path d="M2.2 9.8 Q4 6.5 6 7.3 Q7.5 8 9 9.6 Q10.5 10.5 12 7 Q13 4.5 14 5" stroke="#000" stroke-width="2.2" fill="none" transform="translate(0.4,0.6)"/><path d="M2.2 9.8 Q4 6.5 6 7.3 Q7.5 8 9 9.6 Q10.5 10.5 12 7 Q13 4.5 14 5" stroke="#f2f8e8" stroke-width="1.2" fill="none"/></svg>
<div class="mod" style="top:273px;background:#2a2a31;letter-spacing:1.28px">Color Over Life</div>
<div class="a" style="left:307px;top:296px;width:179px;height:1px;background:#000"></div>
<div class="chk" style="top:278px"></div><svg style="left:448px;top:278px" width="14" height="14"><path d="M3 8.3 L5.5 10.8 L10.5 5.3" stroke="#000" stroke-width="1.2" fill="none"/><path d="M3 7.6 L5.5 10 L10.5 4.5" stroke="#fff" stroke-width="1.1" fill="none"/></svg>
<svg style="left:467px;top:277px" width="16" height="16"><rect x="0" y="0" width="16" height="16" fill="#000"/><rect x="1" y="1" width="14" height="14" fill="#66ae56"/><rect x="2" y="2" width="12" height="12" fill="#555"/><rect x="2.3" y="2.3" width="2" height="2" fill="#000"/><rect x="2.3" y="5.3" width="2" height="2" fill="#000"/><rect x="2.3" y="8.3" width="2" height="2" fill="#000"/><rect x="2.3" y="11.3" width="2" height="2" fill="#000"/><rect x="5.3" y="2.3" width="2" height="2" fill="#000"/><rect x="5.3" y="5.3" width="2" height="2" fill="#000"/><rect x="5.3" y="8.3" width="2" height="2" fill="#000"/><rect x="5.3" y="11.3" width="2" height="2" fill="#000"/><rect x="8.3" y="2.3" width="2" height="2" fill="#000"/><rect x="8.3" y="5.3" width="2" height="2" fill="#000"/><rect x="8.3" y="8.3" width="2" height="2" fill="#000"/><rect x="8.3" y="11.3" width="2" height="2" fill="#000"/><rect x="11.3" y="2.3" width="2" height="2" fill="#000"/><rect x="11.3" y="5.3" width="2" height="2" fill="#000"/><rect x="11.3" y="8.3" width="2" height="2" fill="#000"/><rect x="11.3" y="11.3" width="2" height="2" fill="#000"/><path d="M2.2 9.8 Q4 6.5 6 7.3 Q7.5 8 9 9.6 Q10.5 10.5 12 7 Q13 4.5 14 5" stroke="#000" stroke-width="2.2" fill="none" transform="translate(0.4,0.6)"/><path d="M2.2 9.8 Q4 6.5 6 7.3 Q7.5 8 9 9.6 Q10.5 10.5 12 7 Q13 4.5 14 5" stroke="#f2f8e8" stroke-width="1.2" fill="none"/></svg>
<!-- h scrollbar -->
<div class="a" style="left:307px;top:579px;width:1275px;height:17px;background:linear-gradient(#fdfdfd 0,#fdfdfd 1px,#e9e9e9 1px,#e9e9e9 100%)"></div>
<svg style="left:313px;top:584px" width="5" height="7"><path d="M4.5 0 L0 3.5 L4.5 7Z" fill="#3c3c3c"/></svg>
<svg style="left:1572px;top:584px" width="5" height="7"><path d="M0 0 L4.5 3.5 L0 7Z" fill="#3c3c3c"/></svg>
<div class="a" style="left:325px;top:580px;width:48px;height:15px;border:1px solid #9a9a9a;border-radius:2px;background:linear-gradient(#f6f6f6 0%,#ececec 45%,#dcdcdc 50%,#d6d6d8 100%)"></div>
<svg style="left:344px;top:584px" width="10" height="8"><path d="M1.5 0 V7 M4.5 0 V7 M7.5 0 V7" stroke="#3a3a3a" stroke-width="1.2"/><path d="M2.6 1 V7.5 M5.6 1 V7.5 M8.6 1 V7.5" stroke="#fff" stroke-width=".8" opacity=".8"/></svg>
<!-- v scrollbar -->
<div class="a" style="left:1582px;top:69px;width:17px;height:510px;background:linear-gradient(90deg,#fcfcfc 0,#fcfcfc 1px,#ebebeb 1px)"></div>
<div class="a" style="left:1582px;top:579px;width:17px;height:17px;background:linear-gradient(90deg,#fcfcfc 0,#fcfcfc 1px,#ebebeb 1px)"></div><svg style="left:1588px;top:586px" width="7" height="4"><path d="M0 0 L3.5 4 L7 0Z" fill="#3c3c3c"/></svg>
<svg style="left:1588px;top:76px" width="7" height="4"><path d="M0 4 L3.5 0 L7 4Z" fill="#3c3c3c"/></svg>
<div class="a" style="left:1584px;top:87px;width:14px;height:18px;border:1px solid #9a9a9a;border-radius:2px;background:linear-gradient(90deg,#f6f6f6 0%,#ececec 45%,#dcdcdc 50%,#d6d6d8 100%)"></div>
<div class="a" style="left:1587px;top:92px;width:7px;height:1px;background:#444;box-shadow:0 1px 0 #fafafa,0 3px 0 #444,0 4px 0 #fafafa,0 6px 0 #444,0 7px 0 #fafafa"></div>

<!-- PROPERTIES PANEL -->
<div class="a" style="left:0;top:601px;width:798px;height:259px;background:#a8a8a8"></div>
<div class="hdr" style="left:1px;top:601px;width:796px;height:18px;padding-top:2px">Properties: PS_Smoke</div>
<svg style="left:783px;top:606px" width="10" height="8"><path d="M0.5 0.5 L9.5 7.5 M9.5 0.5 L0.5 7.5" stroke="#000" stroke-width="1.6"/></svg>
<div class="a" style="left:1px;top:619px;width:796px;height:240px;background:#f0f0f0"></div>
<div class="a" style="left:18px;top:642px;width:762px;height:168px;background:repeating-linear-gradient(#fbfbfb 0,#fbfbfb 2px,transparent 2px,transparent 24px)"></div>
<div class="cat" style="top:620px">Particle System</div>
<div class="cat" style="top:644px">Thumbnail</div>
<div class="cat" style="top:668px">LOD</div>
<div class="cat" style="top:692px">Bounds</div>
<div class="cat" style="top:716px">Delay</div>
<div class="cat" style="top:740px">Macro UV</div>
<div class="cat" style="top:764px">Occlusion</div>
<div class="cat" style="top:788px">Mobile</div>
<!-- props vscroll -->
<div class="a" style="left:781px;top:619px;width:16px;height:240px;background:#ececec"></div>
<svg style="left:786px;top:626px" width="7" height="4"><path d="M0 4 L3.5 0 L7 4Z" fill="#3c3c3c"/></svg>
<svg style="left:786px;top:849px" width="7" height="4"><path d="M0 0 L3.5 4 L7 0Z" fill="#3c3c3c"/></svg>
<div class="a" style="left:782px;top:636px;width:14px;height:203px;border:1px solid #9a9a9a;border-radius:2px;background:linear-gradient(90deg,#f6f6f6 0%,#ececec 45%,#dcdcdc 50%,#d6d6d8 100%)"></div>
<div class="a" style="left:785px;top:734px;width:7px;height:1px;background:#444;box-shadow:0 1px 0 #fafafa,0 3px 0 #444,0 4px 0 #fafafa,0 6px 0 #444,0 7px 0 #fafafa"></div>

<!-- CURVE EDITOR -->
<div class="a" style="left:802px;top:601px;width:798px;height:259px;background:#a8a8a8"></div>
<div class="hdr" style="left:803px;top:601px;width:796px;height:19px;padding-top:2px">Unreal Curve Editor: PS_Smoke</div>
<svg style="left:1585px;top:606px" width="10" height="9"><path d="M0 0 L10 9 M10 0 L0 9" stroke="#000" stroke-width="1.6"/></svg>
<div class="a" style="left:803px;top:620px;width:796px;height:21px;background:linear-gradient(#ffffff 0px,#f0f2f9 8px,#e2e7f2 9.5px,#d6dcea 10.5px,#d8deec 19px,#dfe4f0 21px)"></div>
<div class="a" style="left:803px;top:641px;width:796px;height:218px;background:#f0f0f0"></div>
<div class="sep" style="left:805px;top:623px;height:16px"></div><div class="sep" style="left:897px;top:623px;height:16px"></div><div class="sep" style="left:947px;top:623px;height:16px"></div><div class="sep" style="left:1081px;top:623px;height:16px"></div><div class="sep" style="left:1131px;top:623px;height:16px"></div><div class="sep" style="left:1160px;top:623px;height:16px"></div>
<svg style="left:814px;top:624px" width="14" height="14"><rect width="14" height="14" fill="#fff"/><path d="M3 1.5 Q1 3 1 7 Q1 11 3 12.5 M11 1.5 Q13 3 13 7 Q13 11 11 12.5" stroke="#777" stroke-width="0.8" fill="none"/><path d="M3.5 7 H10.5" stroke="#333" stroke-width="1.8"/><path d="M2.5 7 L5.5 4 V10Z M11.5 7 L8.5 4 V10Z" fill="#333"/></svg>
<svg style="left:835px;top:624px" width="14" height="14"><rect width="14" height="14" fill="#fff"/><path d="M1.5 3 Q3 1 7 1 Q11 1 12.5 3 M1.5 11 Q3 13 7 13 Q11 13 12.5 11" stroke="#777" stroke-width="0.8" fill="none"/><path d="M7 3.5 V10.5" stroke="#333" stroke-width="1.8"/><path d="M7 2 L4 5.5 H10Z M7 12 L4 8.5 H10Z" fill="#333"/></svg>
<svg style="left:856px;top:624px" width="14" height="14"><rect width="14" height="14" fill="#fff"/><path d="M4 0.5 H10 L13.5 4 V10 L10 13.5 H4 L0.5 10 V4Z" fill="none" stroke="#777" stroke-width="0.8"/><path d="M7 1.8 L12.2 7 L7 12.2 L1.8 7Z" fill="#222"/><path d="M7 3 V11 M3 7 H11" stroke="#666" stroke-width="0.7"/></svg>
<svg style="left:877px;top:624px" width="14" height="14"><rect width="14" height="14" fill="#fff"/><path d="M4 0.5 H10 L13.5 4 V10 L10 13.5 H4 L0.5 10 V4Z" fill="none" stroke="#777" stroke-width="0.8"/><path d="M7 1.8 L12.2 7 L7 12.2 L1.8 7Z" fill="#222"/><rect x="5" y="5" width="4" height="4" fill="#fff"/><path d="M7 3 V11 M3 7 H11" stroke="#666" stroke-width="0.7"/></svg>
<div class="pb" style="left:903px;top:622px;width:21px;height:18px;background:linear-gradient(#e2e4ec,#cfd3de)"></div>
<svg style="left:907px;top:624px" width="14" height="14"><path d="M7 1 V13 M1 7 H13" stroke="#5a5a68" stroke-width="2"/><path d="M7 0.5 L4.5 3.5 H9.5Z M7 13.5 L4.5 10.5 H9.5Z M0.5 7 L3.5 4.5 V9.5Z M13.5 7 L10.5 4.5 V9.5Z" fill="#5a5a68"/></svg>
<svg style="left:927px;top:624px" width="14" height="14"><rect width="14" height="14" fill="#ebe7d6"/><circle cx="6.5" cy="6.5" r="3.5" fill="none" stroke="#222" stroke-width="1.2"/><path d="M6.5 1 V12 M1 6.5 H12" stroke="#222" stroke-width="1"/><path d="M6.5 0 L5 2 H8Z M6.5 13 L5 11 H8Z M0 6.5 L2 5 V8Z M13 6.5 L11 5 V8Z" fill="#222"/><path d="M9 9 L13 13" stroke="#111" stroke-width="2.2" stroke-linecap="round"/></svg>
<svg style="left:957px;top:625px" width="12" height="11"><path d="M1 1 L5 9 M11 1 L7 9" stroke="#000" stroke-width="1"/><rect x="0.5" y="8.5" width="2.2" height="2.2" fill="#000"/><rect x="5" y="8.5" width="2.2" height="2.2" fill="#000"/><rect x="9.5" y="8.5" width="2.2" height="2.2" fill="#000"/><text x="6" y="5.5" font-size="5.5" text-anchor="middle" font-family="Liberation Sans" fill="#000">A</text></svg>
<svg style="left:978px;top:625px" width="12" height="11"><path d="M1 1 L5 9 M11 1 L7 9" stroke="#000" stroke-width="1"/><rect x="0.5" y="8.5" width="2.2" height="2.2" fill="#000"/><rect x="5" y="8.5" width="2.2" height="2.2" fill="#000"/><rect x="9.5" y="8.5" width="2.2" height="2.2" fill="#000"/><text x="6" y="6" font-size="6" text-anchor="middle" font-family="Liberation Sans" fill="#008000">C</text></svg>
<svg style="left:999px;top:625px" width="12" height="11"><path d="M1 1 L5 9 M11 1 L7 9" stroke="#000" stroke-width="1"/><rect x="0.5" y="8.5" width="2.2" height="2.2" fill="#000"/><rect x="5" y="8.5" width="2.2" height="2.2" fill="#000"/><rect x="9.5" y="8.5" width="2.2" height="2.2" fill="#000"/></svg>
<svg style="left:1020px;top:625px" width="11" height="11"><path d="M0 10 H5.5 Q6 6 10 1.5" stroke="#000" stroke-width="1" fill="none"/><rect x="5" y="8.5" width="2.2" height="2.2" fill="#000"/></svg>
<svg style="left:1041px;top:626px" width="12" height="10"><path d="M1.5 8.5 L10.5 2" stroke="#000" stroke-width="1.1"/><rect x="0.5" y="7.5" width="2.2" height="2.2" fill="#000"/><rect x="9.5" y="1" width="2.2" height="2.2" fill="#000"/></svg>
<svg style="left:1062px;top:626px" width="12" height="10"><path d="M1.5 8.5 H10.5" stroke="#000" stroke-width="1.1"/><path d="M10.5 1 V8" stroke="#000" stroke-width="1" stroke-dasharray="1 1"/><rect x="0.5" y="7.5" width="2.2" height="2.2" fill="#000"/><rect x="9.5" y="0.5" width="2.2" height="2.2" fill="#000"/></svg>
<svg style="left:1090px;top:625px" width="14" height="13"><path d="M3 0 V4" stroke="#8a0000" stroke-width="1.4"/><path d="M0.5 3 H5.5 L3 6Z" fill="#8a0000"/><path d="M10 0 V4" stroke="#8a0000" stroke-width="1.4"/><path d="M7.5 3 H12.5 L10 6Z" fill="#8a0000"/><path d="M1 9.5 H13" stroke="#000" stroke-width="1.6"/><circle cx="6.5" cy="9.5" r="1.3" fill="#fff" stroke="#000" stroke-width=".8"/></svg>
<svg style="left:1110px;top:625px" width="16" height="13"><path d="M3.5 0 V4" stroke="#8a0000" stroke-width="1.4"/><path d="M1.0 3 H6.0 L3.5 6Z" fill="#8a0000"/><path d="M11.5 12 V8" stroke="#b00000" stroke-width="1.4"/><path d="M9.0 9 H14.0 L11.5 6Z" fill="#b00000"/><path d="M1.5 10 L13 2" stroke="#000" stroke-width="1.5"/></svg>
<svg style="left:1140px;top:624px" width="14" height="14"><path d="M0 3 Q5 3 7 7 Q9 10 11 14" stroke="#6a6ac0" stroke-width="0.8" fill="none"/><path d="M2.5 1 L12 11" stroke="#111" stroke-width="1.1"/><circle cx="7" cy="6" r="1.6" fill="#ddd" stroke="#111"/><circle cx="2.5" cy="1" r="1" fill="#111"/><circle cx="11.5" cy="10.5" r="1.2" fill="#111"/></svg>
<svg style="left:1169px;top:624px" width="14" height="14"><rect x=".75" y=".75" width="12.5" height="12.5" fill="none" stroke="#00e000" stroke-width="1.5"/><path d="M2 3.5 H12 M2 9.5 H11" stroke="#000" stroke-width="1.6"/><path d="M1.5 3.5 L5 1 V6Z M12.5 9.5 L9 7 V12Z" fill="#000"/><path d="M2 1 V6 M12 7 V12" stroke="#000" stroke-width=".9"/></svg>
<div class="a" style="left:1187px;top:622px;width:150px;height:20px;border:1px solid #8a8a8a;border-bottom:none;border-radius:3px 3px 0 0;background:linear-gradient(#f4f4f4 0%,#ebebeb 45%,#dddddd 50%,#d8d8d8 100%)"></div>
<div class="a" style="left:1190px;top:627px;font-size:11.5px;color:#000;letter-spacing:-0.1px">Default</div>
<svg style="left:1325px;top:631px" width="8" height="5"><path d="M0 0 H7.5 L3.75 4.5Z" fill="#000"/></svg>
<svg style="left:1340px;top:624px" width="14" height="14"><rect x=".75" y=".75" width="12.5" height="12.5" fill="none" stroke="#f00000" stroke-width="1.5"/><path d="M2 3.5 H12 M2 9.5 H11" stroke="#000" stroke-width="1.6"/><path d="M1.5 3.5 L5 1 V6Z M12.5 9.5 L9 7 V12Z" fill="#000"/><path d="M2 1 V6 M12 7 V12" stroke="#000" stroke-width=".9"/></svg>
<!-- curve vscroll -->
<div class="a" style="left:803px;top:646px;width:17px;height:213px;background:#ececec"></div>
<svg style="left:809px;top:652px" width="7" height="4"><path d="M0 4 L3.5 0 L7 4Z" fill="#3c3c3c"/></svg>
<svg style="left:809px;top:849px" width="7" height="4"><path d="M0 0 L3.5 4 L7 0Z" fill="#3c3c3c"/></svg>
<div class="a" style="left:804px;top:662px;width:15px;height:178px;border:1px solid #9a9a9a;border-radius:2px;background:linear-gradient(90deg,#f6f6f6 0%,#ececec 45%,#dcdcdc 50%,#d6d6d8 100%)"></div>
<div class="a" style="left:808px;top:747px;width:7px;height:1px;background:#444;box-shadow:0 1px 0 #fafafa,0 3px 0 #444,0 4px 0 #fafafa,0 6px 0 #444,0 7px 0 #fafafa"></div>
<!-- label area + grid -->
<div class="a" style="left:820px;top:645px;width:779px;height:214px;background:#888"></div>
<div class="a" style="left:820px;top:645px;width:779px;height:1px;background:#000"></div>
<div class="a" style="left:1020px;top:645px;width:1px;height:214px;background:#000"></div>
<div class="a" style="left:1021px;top:646px;width:578px;height:213px;background:#3c3c3c"></div>
<div class="a" style="left:1076px;top:646px;width:1px;height:213px;background:#a0a0a0"></div>
<div class="a" style="left:1134px;top:646px;width:1px;height:213px;background:#a0a0a0"></div>
<div class="a" style="left:1192px;top:646px;width:1px;height:213px;background:#a0a0a0"></div>
<div class="a" style="left:1250px;top:646px;width:1px;height:213px;background:#a0a0a0"></div>
<div class="a" style="left:1308px;top:646px;width:1px;height:213px;background:#a0a0a0"></div>
<div class="a" style="left:1366px;top:646px;width:1px;height:213px;background:#a0a0a0"></div>
<div class="a" style="left:1424px;top:646px;width:1px;height:213px;background:#a0a0a0"></div>
<div class="a" style="left:1482px;top:646px;width:1px;height:213px;background:#a0a0a0"></div>
<div class="a" style="left:1540px;top:646px;width:1px;height:213px;background:#a0a0a0"></div>
<div class="a" style="left:1021px;top:697px;width:578px;height:1px;background:#a0a0a0"></div>
<div class="a" style="left:1021px;top:804px;width:578px;height:1px;background:#a0a0a0"></div>
<div class="a" style="left:1021px;top:751px;width:578px;height:1px;background:#f4f4f4"></div>
<div class="gl" style="left:1022px;top:681px">0.50</div>
<div class="gl" style="left:1022px;top:735px">0.00</div>
<div class="gl" style="left:1022px;top:789px">-0.50</div>
<div class="gl" style="left:1022px;top:842px">0.00</div>
<div class="gl" style="left:1079px;top:842px">0.10</div>
<div class="gl" style="left:1137px;top:842px">0.20</div>
<div class="gl" style="left:1195px;top:842px">0.30</div>
<div class="gl" style="left:1253px;top:842px">0.40</div>
<div class="gl" style="left:1311px;top:842px">0.50</div>
<div class="gl" style="left:1369px;top:842px">0.60</div>
<div class="gl" style="left:1427px;top:842px">0.70</div>
<div class="gl" style="left:1485px;top:842px">0.80</div>
<div class="gl" style="left:1543px;top:842px">0.90</div>
<div class="a" style="left:802px;top:859px;width:798px;height:1px;background:#a8a8a8"></div>
</body></html>
